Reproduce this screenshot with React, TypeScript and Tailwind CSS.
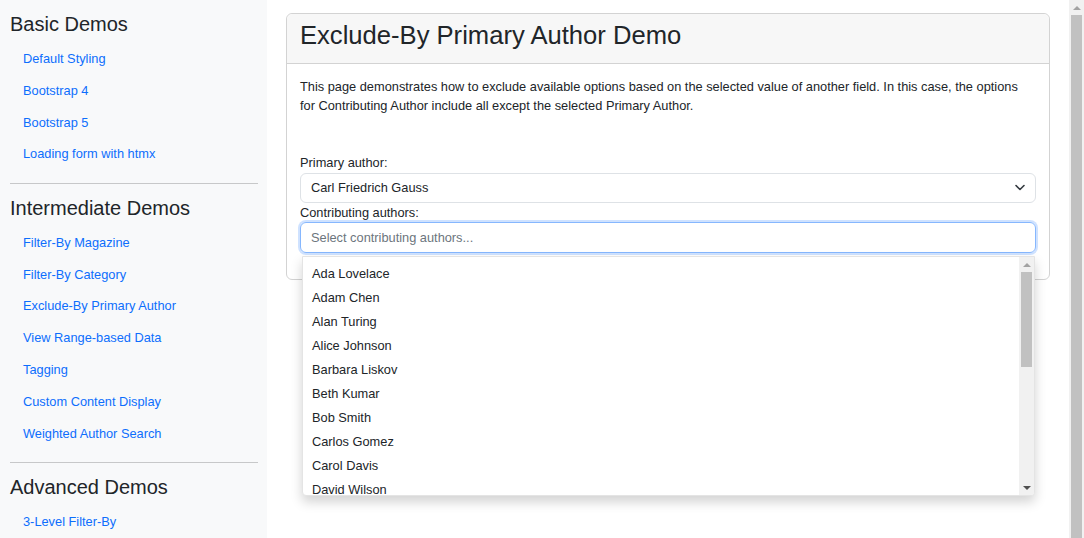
import React from "react";

const font = { fontFamily: '"Liberation Sans", Arial, sans-serif' };

function SideHeading({ children }: { children: React.ReactNode }) {
  return <div className="h-[24px] text-[20px] leading-[24px] text-[#212529]">{children}</div>;
}

function SideLinks({ items }: { items: string[] }) {
  return (
    <div className="mt-[6.5px] flex flex-col">
      {items.map((t) => (
        <a key={t} className="flex h-[31.85px] items-center pl-[13px] text-[12.8px] text-[#0d6efd]">
          {t}
        </a>
      ))}
    </div>
  );
}

function Divider() {
  return <div className="mb-[12px] mt-[13px] border-t border-[#c7c8c9]" />;
}

const authors = [
  "Ada Lovelace",
  "Adam Chen",
  "Alan Turing",
  "Alice Johnson",
  "Barbara Liskov",
  "Beth Kumar",
  "Bob Smith",
  "Carlos Gomez",
  "Carol Davis",
  "David Wilson",
  "Donald Knuth",
];

export default function App() {
  return (
    <div className="flex h-[538px] w-[1084px] overflow-hidden bg-white" style={font}>
      <aside className="w-[267px] shrink-0 bg-[#f8f9fa] pl-[10px] pr-[9px] pt-[12px]">
        <SideHeading>Basic Demos</SideHeading>
        <SideLinks items={["Default Styling", "Bootstrap 4", "Bootstrap 5", "Loading form with htmx"]} />
        <Divider />
        <SideHeading>Intermediate Demos</SideHeading>
        <SideLinks
          items={[
            "Filter-By Magazine",
            "Filter-By Category",
            "Exclude-By Primary Author",
            "View Range-based Data",
            "Tagging",
            "Custom Content Display",
            "Weighted Author Search",
          ]}
        />
        <Divider />
        <SideHeading>Advanced Demos</SideHeading>
        <SideLinks items={["3-Level Filter-By"]} />
      </aside>

      <main className="min-w-0 flex-1 pl-[19px] pr-[19px] pt-[13px]">
        <div className="rounded-[6px] border border-[#d3d3d3]">
          <div className="flex h-[50px] items-center rounded-t-[6px] border-b border-[#d3d3d3] bg-[#f7f7f7] px-[13px] pb-[8px]">
            <h3 className="text-[25.6px] leading-[30px] text-[#212529]">Exclude-By Primary Author Demo</h3>
          </div>
          <div className="px-[13px] pb-[26px] pt-[12.5px] text-[12.8px] leading-[19.2px] text-[#212529]">
            <p>
              This page demonstrates how to exclude available options based on the selected value of another field. In
              this case, the options for Contributing Author include all except the selected Primary Author.
            </p>
            <div className="mt-[38.5px]">
              <label className="block">Primary author:</label>
              <div className="flex h-[30.5px] items-center justify-between rounded-[6px] border border-[#dee2e6] pl-[10px] pr-[10px]">
                <span>Carl Friedrich Gauss</span>
                <svg width="10" height="7" viewBox="0 0 10 7">
                  <path d="M1 1.5l4 4 4-4" fill="none" stroke="#343a40" strokeWidth="1.6" strokeLinecap="round" strokeLinejoin="round" />
                </svg>
              </div>
              <label className="block">Contributing authors:</label>
              <div className="relative">
                <div className="flex h-[30.5px] items-center rounded-[6px] border border-[#86b7fe] pl-[10px] text-[#6c757d] shadow-[0_0_0_2px_rgba(13,110,253,0.2)]">
                  Select contributing authors...
                </div>
                <div className="absolute left-[2px] right-[1px] top-full z-10 mt-[3.5px] flex h-[240px] overflow-hidden rounded-b-[4px] border border-[#e4e4e4] bg-white shadow-[0_6px_12px_rgba(0,0,0,0.175)]">
                  <div className="flex-1 pt-[4px]">
                    {authors.map((a) => (
                      <div key={a} className="flex h-[24px] items-center pl-[9px] text-[12.8px] text-[#212529]">
                        {a}
                      </div>
                    ))}
                  </div>
                  <div className="flex w-[15px] flex-col bg-[#f1f1f1]">
                    <div className="flex h-[15px] items-center justify-center">
                      <div className="h-0 w-0 border-x-[4px] border-b-[4px] border-x-transparent border-b-[#a3a3a3]" />
                    </div>
                    <div className="mx-[2px] h-[95px] bg-[#c1c1c1]" />
                    <div className="flex-1" />
                    <div className="flex h-[15px] items-center justify-center">
                      <div className="h-0 w-0 border-x-[4px] border-t-[4px] border-x-transparent border-t-[#505050]" />
                    </div>
                  </div>
                </div>
              </div>
            </div>
          </div>
        </div>
      </main>

      <div className="flex w-[15px] shrink-0 flex-col bg-[#f1f1f1]">
        <div className="flex h-[15px] items-center justify-center">
          <div className="h-0 w-0 border-x-[4px] border-b-[4px] border-x-transparent border-b-[#a3a3a3]" />
        </div>
        <div className="mx-[2px] flex-1 bg-[#c1c1c1]" />
      </div>
    </div>
  );
}
